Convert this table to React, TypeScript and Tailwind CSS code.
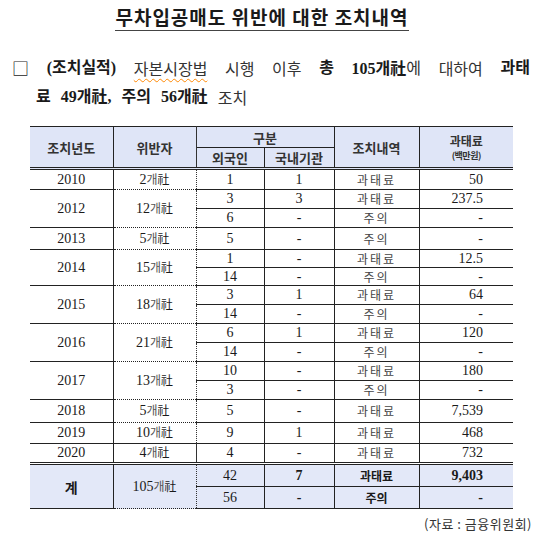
type Sub = { f: string; d: string; act: string; fine: string };
type Row = { year: string; who: string; subs: Sub[]; hs: string[] };

const rows: Row[] = [
  { year: "2010", who: "2", subs: [{ f: "1", d: "1", act: "과태료", fine: "50" }], hs: ["h-[21px]"] },
  {
    year: "2012",
    who: "12",
    subs: [
      { f: "3", d: "3", act: "과태료", fine: "237.5" },
      { f: "6", d: "-", act: "주의", fine: "-" },
    ],
    hs: ["h-[19px]", "h-[19px]"],
  },
  { year: "2013", who: "5", subs: [{ f: "5", d: "-", act: "주의", fine: "-" }], hs: ["h-[22px]"] },
  {
    year: "2014",
    who: "15",
    subs: [
      { f: "1", d: "-", act: "과태료", fine: "12.5" },
      { f: "14", d: "-", act: "주의", fine: "-" },
    ],
    hs: ["h-[18px]", "h-[18px]"],
  },
  {
    year: "2015",
    who: "18",
    subs: [
      { f: "3", d: "1", act: "과태료", fine: "64" },
      { f: "14", d: "-", act: "주의", fine: "-" },
    ],
    hs: ["h-[19px]", "h-[19px]"],
  },
  {
    year: "2016",
    who: "21",
    subs: [
      { f: "6", d: "1", act: "과태료", fine: "120" },
      { f: "14", d: "-", act: "주의", fine: "-" },
    ],
    hs: ["h-[19px]", "h-[19px]"],
  },
  {
    year: "2017",
    who: "13",
    subs: [
      { f: "10", d: "-", act: "과태료", fine: "180" },
      { f: "3", d: "-", act: "주의", fine: "-" },
    ],
    hs: ["h-[19px]", "h-[19px]"],
  },
  { year: "2018", who: "5", subs: [{ f: "5", d: "-", act: "과태료", fine: "7,539" }], hs: ["h-[23px]"] },
  { year: "2019", who: "10", subs: [{ f: "9", d: "1", act: "과태료", fine: "468" }], hs: ["h-[21px]"] },
  { year: "2020", who: "4", subs: [{ f: "4", d: "-", act: "과태료", fine: "732" }], hs: ["h-[20px]"] },
];

const serif = "font-['Liberation_Serif','Noto_Sans_CJK_KR',serif]";
const line = "border-[#222]";

function Corp({ n, bold }: { n: string; bold?: boolean }) {
  return (
    <span className={bold ? "font-bold" : ""}>
      {n}
      <span className="font-['Noto_Sans_CJK_KR',sans-serif] text-[12px] text-[#555]">개</span>
      <span className="font-['Noto_Sans_CJK_KR',sans-serif] text-[12px]">社</span>
    </span>
  );
}

function BodyRows({ r, last }: { r: Row; last: boolean }) {
  return (
    <>
      {r.subs.map((s, i) => {
        const top = `border-t ${line}`;
        const bottom = last && i === r.subs.length - 1 ? "border-b-[3px] border-double border-b-[#222]" : "";
        return (
          <tr key={i} className={r.hs[i]}>
            {i === 0 && (
              <>
                <td rowSpan={r.subs.length} className={`${top} ${bottom} border-r ${line} text-center`}>
                  {r.year}
                </td>
                <td
                  rowSpan={r.subs.length}
                  className={`${top} ${bottom} border-r border-dotted border-r-[#333] text-center`}
                >
                  <Corp n={r.who} />
                </td>
              </>
            )}
            <td className={`${top} ${bottom} border-r ${line} text-center`}>{s.f}</td>
            <td className={`${top} ${bottom} border-r ${line} text-center`}>{s.d}</td>
            <td
              className={`${top} ${bottom} border-r ${line} text-center font-['Noto_Sans_CJK_KR',sans-serif] text-[12px] tracking-[2px] text-[#444]`}
            >
              {s.act}
            </td>
            <td className={`${top} ${bottom} pr-[30px] text-right`}>{s.fine}</td>
          </tr>
        );
      })}
    </>
  );
}

export default function App() {
  return (
    <div className="w-[540px] h-[546px] bg-white text-[#1a1a1a] relative">
      <div className="pt-[5px] flex justify-center pr-[16px]">
        <h1 className="font-['Noto_Sans_CJK_KR',sans-serif] font-bold text-[19px] leading-[24px] tracking-[1px] border-b border-[#444] pb-[1px]">
          무차입공매도 위반에 대한 조치내역
        </h1>
      </div>

      <div className={`${serif} text-[16px] mt-[26px] pl-[12px] pr-[10px]`}>
        <div className="flex justify-between items-center h-[22px]">
          <span className="font-['Noto_Sans_CJK_KR',sans-serif] text-[17px]">□</span>
          <span className="font-bold">(조치실적)</span>
          <span className="underline decoration-wavy decoration-orange-400 underline-offset-[3px] decoration-1 font-['Noto_Sans_CJK_KR',sans-serif] text-[#333]">
            자본시장법
          </span>
          <span className="font-['Noto_Sans_CJK_KR',sans-serif] text-[#333]">시행</span>
          <span className="font-['Noto_Sans_CJK_KR',sans-serif] text-[#333]">이후</span>
          <span className="font-bold">총</span>
          <span>
            <span className="font-bold">105개社</span>
            <span className="font-['Noto_Sans_CJK_KR',sans-serif] text-[#333]">에</span>
          </span>
          <span className="font-['Noto_Sans_CJK_KR',sans-serif] text-[#333]">대하여</span>
          <span className="font-bold">과태</span>
        </div>
        <div className="flex items-center gap-[10px] h-[22px] mt-[7px] pl-[24px]">
          <span className="font-bold">료</span>
          <span className="font-bold">49개社,</span>
          <span className="font-bold">주의</span>
          <span className="font-bold">56개社</span>
          <span className="font-['Noto_Sans_CJK_KR',sans-serif] text-[#333]">조치</span>
        </div>
      </div>

      <table className={`ml-[30px] mt-[18px] w-[483px] table-fixed border-collapse ${serif} text-[14px] leading-none`}>
        <colgroup>
          <col className="w-[83px]" />
          <col className="w-[83px]" />
          <col className="w-[68px]" />
          <col className="w-[70px]" />
          <col className="w-[85px]" />
          <col className="w-[94px]" />
        </colgroup>
        <thead className="bg-[#dfe5f7] font-['Noto_Sans_CJK_KR',sans-serif] font-bold text-[13px] text-[#333]">
          <tr className="h-[21px]">
            <th rowSpan={2} className={`border-t ${line} border-r border-b-[3px] border-double border-b-[#222] font-bold`}>
              조치년도
            </th>
            <th
              rowSpan={2}
              className={`border-t ${line} border-r border-dotted border-r-[#333] border-b-[3px] border-double border-b-[#222] font-bold`}
            >
              위반자
            </th>
            <th colSpan={2} className={`border-t border-b border-r ${line} font-bold`}>
              구분
            </th>
            <th rowSpan={2} className={`border-t ${line} border-r border-b-[3px] border-double border-b-[#222] font-bold`}>
              조치내역
            </th>
            <th rowSpan={2} className={`border-t ${line} border-b-[3px] border-double border-b-[#222] font-bold`}>
              <div className="flex flex-col items-center">
                <span className="text-[12px] leading-[17px]">과태료</span>
                <span className="text-[9px] leading-[13px] tracking-[-0.5px]">(백만원)</span>
              </div>
            </th>
          </tr>
          <tr className="h-[21px]">
            <th className={`border-r ${line} border-b-[3px] border-double border-b-[#222] font-bold`}>외국인</th>
            <th className={`border-r ${line} border-b-[3px] border-double border-b-[#222] font-bold`}>국내기관</th>
          </tr>
        </thead>
        <tbody>
          {rows.map((r, i) => (
            <BodyRows key={r.year} r={r} last={i === rows.length - 1} />
          ))}
          <tr className="h-[23px] bg-[#e3e8f8] font-bold">
            <td rowSpan={2} className={`border-r ${line} border-b text-center font-['Noto_Sans_CJK_KR',sans-serif]`}>
              계
            </td>
            <td rowSpan={2} className="border-r border-dotted border-r-[#333] border-b border-b-[#222] text-center font-normal">
              <Corp n="105" />
            </td>
            <td className={`border-r border-b ${line} text-center font-normal`}>42</td>
            <td className={`border-r border-b ${line} text-center`}>7</td>
            <td className={`border-r border-b ${line} text-center font-['Noto_Sans_CJK_KR',sans-serif] text-[12px]`}>
              과태료
            </td>
            <td className={`border-b ${line} pr-[30px] text-right`}>9,403</td>
          </tr>
          <tr className="h-[22px] bg-[#e3e8f8] font-bold">
            <td className={`border-r border-b ${line} text-center font-normal`}>56</td>
            <td className={`border-r border-b ${line} text-center`}>-</td>
            <td className={`border-r border-b ${line} text-center font-['Noto_Sans_CJK_KR',sans-serif] text-[12px]`}>
              주의
            </td>
            <td className={`border-b ${line} pr-[30px] text-right`}>-</td>
          </tr>
        </tbody>
      </table>

      <div className="flex justify-end pr-[8px] mt-[5px]">
        <span className="font-['Noto_Sans_CJK_KR',sans-serif] text-[13px] text-[#333] tracking-[0.5px]">
          (자료 : 금융위원회)
        </span>
      </div>
    </div>
  );
}
